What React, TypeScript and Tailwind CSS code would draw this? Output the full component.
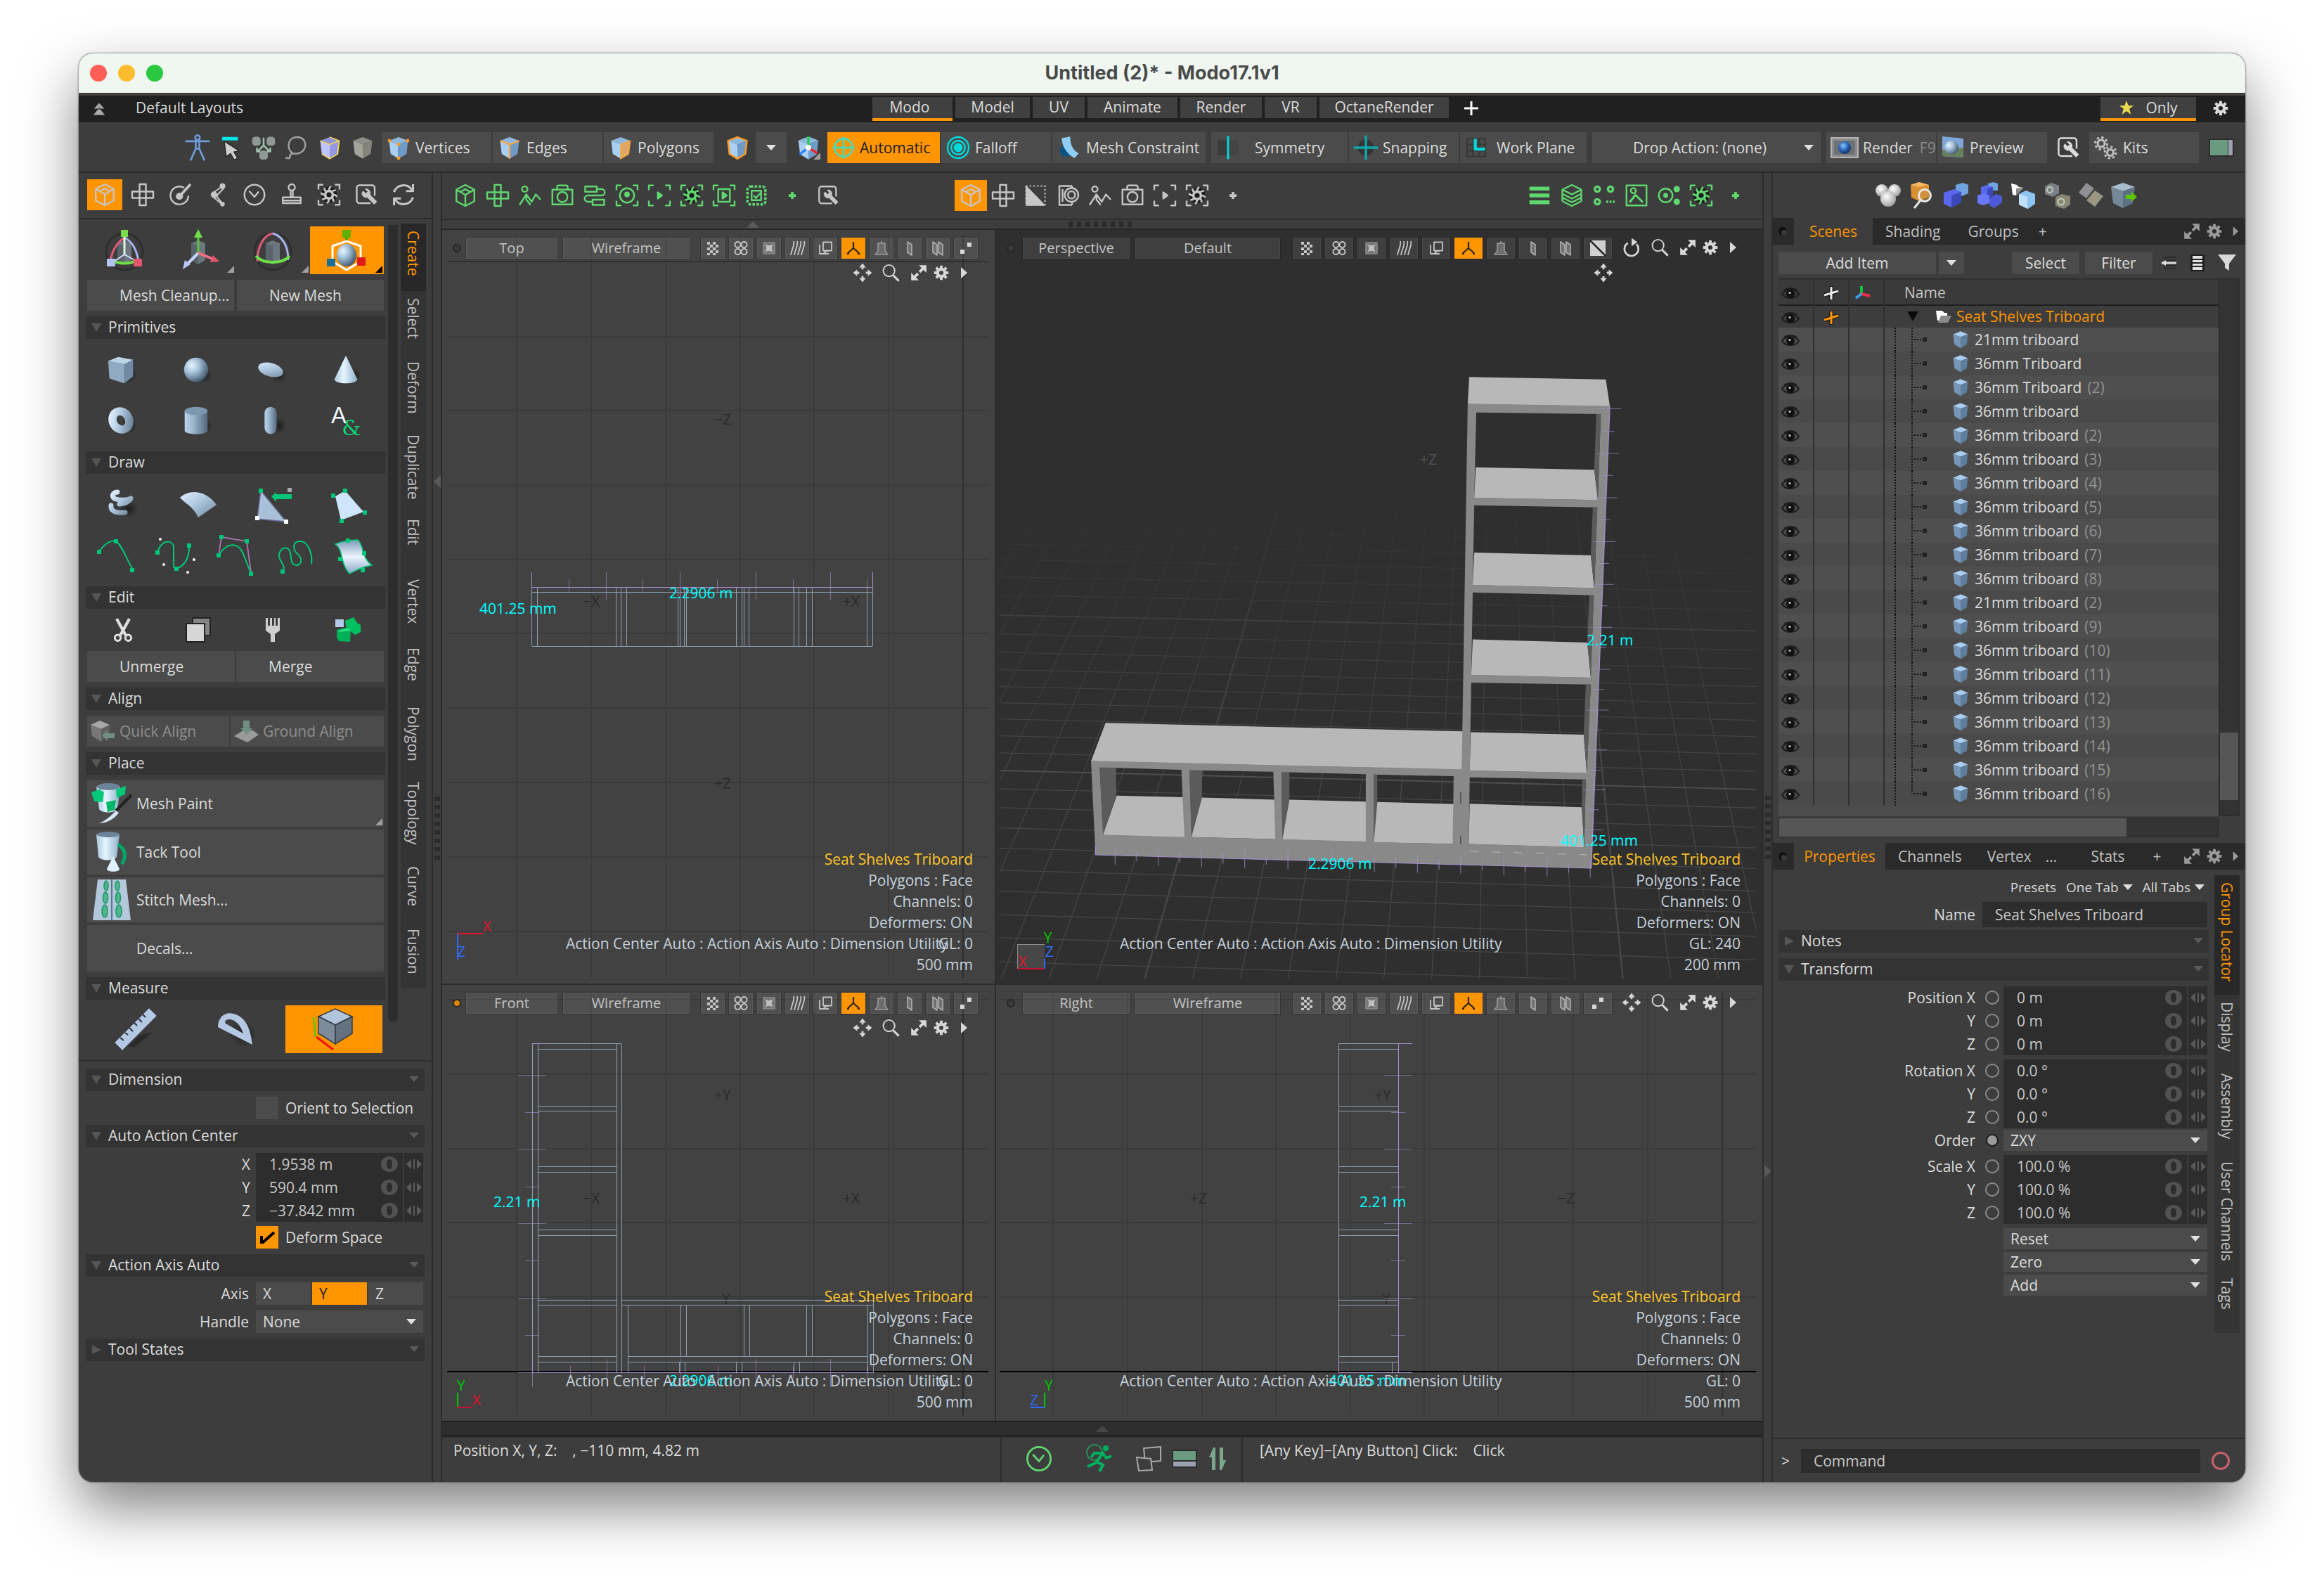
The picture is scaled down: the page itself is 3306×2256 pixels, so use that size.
import React from 'react';

type Kids = { children?: React.ReactNode };

/* ---------- generic drawing helpers ---------- */

function Ico({ size = 36, children, className = '' }: Kids & { size?: number; className?: string }) {
  return (
    <svg width={size} height={size} viewBox="0 0 24 24" fill="none" stroke="currentColor" strokeWidth="1.6" strokeLinejoin="round" className={'shrink-0 ' + className}>
      {children}
    </svg>
  );
}

function Defs() {
  return (
    <svg width="0" height="0" className="absolute">
      <defs>
        <linearGradient id="gh" x1="0" x2="1"><stop offset="0" stopColor="#b9d3ea" /><stop offset=".35" stopColor="#9db8cf" /><stop offset="1" stopColor="#54687b" /></linearGradient>
        <linearGradient id="gd" x1="0" y1="0" x2="1" y2="1"><stop offset="0" stopColor="#e2f0ff" /><stop offset=".5" stopColor="#a9c3da" /><stop offset="1" stopColor="#6d8499" /></linearGradient>
        <linearGradient id="gl" x1="0" x2="1"><stop offset="0" stopColor="#a9c6dd" /><stop offset=".4" stopColor="#e6f6ff" /><stop offset="1" stopColor="#8db0c8" /></linearGradient>
        <linearGradient id="gw" x1="0" y1="0" x2="0" y2="1"><stop offset="0" stopColor="#7f9ab8" /><stop offset=".5" stopColor="#eaf4ff" /><stop offset="1" stopColor="#8aa6c6" /></linearGradient>
        <radialGradient id="gs" cx=".32" cy=".32" r=".75"><stop offset="0" stopColor="#e8f5ff" /><stop offset=".45" stopColor="#9dbbd4" /><stop offset="1" stopColor="#3f5366" /></radialGradient>
        <radialGradient id="gb" cx=".4" cy=".35" r=".7"><stop offset="0" stopColor="#8fc7ff" /><stop offset=".5" stopColor="#2a67b8" /><stop offset="1" stopColor="#0d2c5c" /></radialGradient>
        <radialGradient id="gwh" cx=".4" cy=".35" r=".7"><stop offset="0" stopColor="#ffffff" /><stop offset="1" stopColor="#9a9a9a" /></radialGradient>
        <radialGradient id="shadow"><stop offset="0" stopColor="#000" stopOpacity=".5" /><stop offset="1" stopColor="#000" stopOpacity="0" /></radialGradient>
      </defs>
    </svg>
  );
}

/* Solid cube in three shades */
function Cube({ size = 36, top = '#8fb8de', left = '#a9d0f2', right = '#6f9cc6', edge = '' }: { size?: number; top?: string; left?: string; right?: string; edge?: string }) {
  return (
    <svg width={size} height={size} viewBox="0 0 24 24" className="shrink-0">
      <path d="M12 2 21 5.500 12 9 3 5.500z" fill={top} />
      <path d="M3 5.500 12 9V22.500L4.500 18z" fill={left} />
      <path d="M21 5.500 12 9V22.500L19.500 18z" fill={right} />
      {edge === 'vert' && <g fill="#ff9a1f"><path d="M12 9v13.500" stroke="#5f88b0" /><circle cx="3.400" cy="5.500" r="1.600" /><circle cx="20.600" cy="5.500" r="1.600" /><circle cx="12" cy="9" r="1.600" /><circle cx="12" cy="22" r="1.600" /></g>}
      {edge === 'edge' && <path d="M3 5.500 12 9 21 5.500M12 9V22.500" fill="none" stroke="#ffa63a" strokeWidth="1.6" />}
      {edge === 'poly' && <path d="M21 5.500 12 9V22.500L19.500 18z" fill="#e0a868" stroke="#ffa63a" />}
      {edge === 'all' && <path d="M12 2 21 5.500 19.500 18 12 22.500 4.500 18 3 5.500z" fill="none" stroke="#ff9a1f" strokeWidth="1.6" />}
      {edge === 'gold' && <path d="M12 2 21 5.500 19.500 18 12 22.500 4.500 18M3 5.500 12 9 21 5.500" fill="none" stroke="#f5d15a" strokeWidth="1.2" />}
      {edge === 'axis' && <g fill="none" strokeWidth="2"><path d="M12 12V2" stroke="#1fd14a" /><path d="M12 12 4 18" stroke="#2f7bff" /><path d="M12 12 20 17" stroke="#f02020" /><circle cx="12" cy="12" r="1.500" fill="#fff" stroke="#fff" /></g>}
    </svg>
  );
}

function Down({ className = 'text-[#e0e0e0]' }: { className?: string }) {
  return <svg width="14" height="8" viewBox="0 0 14 8" className={'shrink-0 ' + className}><path d="M0 0h14L7 8z" fill="currentColor" /></svg>;
}

function Corner({ className = 'text-[#a0a0a0]' }: { className?: string }) {
  return <svg width="10" height="10" viewBox="0 0 10 10" className={'absolute right-0.5 bottom-0.5 ' + className}><path d="M10 0v10H0z" fill="currentColor" /></svg>;
}

/* ---------- line icon shapes ---------- */

const gearPath = 'M12 5.500V2.500M12 21.500v-3M5.500 12h-3M21.500 12h-3M7.400 7.400 5.300 5.300M18.700 18.700l-2.100-2.100M16.600 7.400l2.100-2.100M5.300 18.700l2.100-2.100';
const brackets = 'M2 7V2.500h4.500M17.500 2.500H22V7M22 17v4.500h-4.500M6.500 21.500H2V17';

const shape = {
  cube: <path d="M12 2 20.500 6.500v11L12 22l-8.500-4.500v-11zM3.500 6.500 12 11.500l8.500-5M12 11.500V22M7 8.800 12 6l5 2.800" />,
  net: <path d="M9 2h6v20H9zM2 9h20v6H2zM9 9v6M15 9v6" />,
  paint: <g><path d="M16 5.500A8.500 8.500 0 1 0 20 13" /><circle cx="11.500" cy="13.500" r="2.600" fill="currentColor" /><path d="M13 12 22 2" strokeWidth="2.400" /></g>,
  bone: <g strokeWidth="1.400"><circle cx="17" cy="3.800" r="2" fill="currentColor" /><circle cx="9" cy="12" r="2.400" fill="currentColor" /><circle cx="17" cy="21" r="1.400" fill="currentColor" /><path d="M15.500 5 7.500 10.500M18 6l-7 7.500M8 14l8.500 7M11 13l6 7.500" /></g>,
  clock: <g><circle cx="12" cy="12" r="9.500" /><path d="M7 8.500 12 14l4-5" /></g>,
  stamp: <g><circle cx="12" cy="5" r="3" /><path d="M11 8v6M13 8v6M3.500 14.500h17V20h-17zM3.500 17.500h17" /></g>,
  gearBox: <g><path d={brackets} /><circle cx="12" cy="12" r="7.500" fill="#1c1c1c" stroke="none" /><circle cx="12" cy="12" r="3.600" strokeWidth="2.400" /><path d="M12 8c0-2 .5-3 2-4M12 16c0 2-.500 3-2 4M8 12c-2 0-3-.500-3.500-2M16 12c2 0 3 .500 3.500 2M9 9c-1-1-1.500-2-1-3.500M15 15c1 1 1.500 2 1 3.500M15 9c1-1 2-1.500 3.500-1M9 15c-1 1-2 1.500-3.500 1" strokeWidth="1.800" /></g>,
  wrenchBox: <g><path d="M16 20H5.500A2.500 2.500 0 0 1 3 17.500v-12A2.500 2.500 0 0 1 5.500 3h12A2.500 2.500 0 0 1 20 5.500V13" /><path d="M9 8.500l2.500 2.500 2-2-2.500-2.500a4 4 0 0 1 4.500 5.500L22 18.500 19.500 21 13 14.500A4 4 0 0 1 8 10z" fill="currentColor" strokeWidth=".6" /></g>,
  refresh: <path d="M3 9.500A9.500 9.500 0 0 1 20 7.500M21 2v6.500h-6.500M21 14.500A9.500 9.500 0 0 1 4 16.500M3 22v-6.500h6.500" strokeWidth="2" />,
  person: <g><circle cx="7" cy="6" r="2.600" /><path d="M2 21 8.500 11l5 7 4-7 4.500 5M8.500 11v5l4 5" /></g>,
  camera: <g><path d="M2.500 6.500h19v14h-19zM7 6.500V4a1.500 1.500 0 0 1 1.500-1.500h7A1.500 1.500 0 0 1 17 4v2.500" /><circle cx="12" cy="13.500" r="4.800" /></g>,
  snake: <path d="M3 3.500h11v5H3zM14 6h4.500a3 3 0 0 1 0 6h-13a3 3 0 0 0 0 6H10M10 16h11v5H10z" />,
  target: <g><path d={brackets} /><circle cx="12" cy="12" r="6.800" /><circle cx="12" cy="11" r="1.800" fill="currentColor" /></g>,
  playB: <g><path d={brackets} /><path d="M10.500 9v6l4-3z" fill="currentColor" /></g>,
  playBox: <g><path d={brackets} /><path d="M6.500 6h11v12h-11z" /><path d="M10.500 9v6l4-3z" fill="currentColor" /></g>,
  chip: <g><rect x="3.500" y="3.500" width="17" height="17" rx="3" strokeDasharray="2.400 1.400" strokeWidth="2.400" /><path d="M7.500 7.500h9v9h-9zM9.500 12l2 2.500 4.500-5" /></g>,
  plus: <path d="M12 8v8M8 12h8" strokeWidth="3" />,
  flip: <g><path d="M3 3h18v18H3z" strokeDasharray="1.500 2" strokeWidth="1.400" /><path d="M3.500 4 20 21H3.500z" fill="currentColor" /></g>,
  lens: <g><path d="M16 3H4v18h12M16 18.500V21M16 3v2M7 6v12" /><circle cx="15.500" cy="11.500" r="6.500" fill="#3d3d3d" /><circle cx="15.500" cy="11.500" r="3.400" /></g>,
  list: <path d="M2.500 5.500h19M2.500 12h19M2.500 18.500h19" strokeWidth="3.600" />,
  layers: <path d="M12 2 21 6.500 12 11 3 6.500zM3 10.500 12 15l9-4.500M3 14 12 18.500l9-4.500M3 17.500 12 22l9-4.500M3 6.500v11M21 6.500v11" />,
  nodes: <g strokeWidth="2.200"><circle cx="5.500" cy="6" r="2.400" /><circle cx="18" cy="6" r="2.400" /><circle cx="5.500" cy="18" r="2.400" /><path d="M14 18h8" strokeDasharray="1.800 1.400" /></g>,
  portrait: <g><path d="M2.500 2.500h19v19h-19z" /><circle cx="9" cy="7.500" r="2.400" /><path d="M5.500 18.500 11 11.500l7 7" strokeWidth="2" /></g>,
  orbit: <g><circle cx="9" cy="12" r="6.500" /><circle cx="9" cy="12" r="1.500" fill="currentColor" /><circle cx="19.500" cy="6" r="2.200" fill="currentColor" /><circle cx="19.500" cy="18" r="2.200" fill="currentColor" /></g>,
  gear: <g><circle cx="12" cy="12" r="4.800" strokeWidth="4" /><path d={gearPath} strokeWidth="3.600" /></g>,
  search: <g><circle cx="10" cy="9.500" r="7" /><path d="m15 15 7 7" strokeWidth="2.600" /></g>,
  move: <g><path d="M12 8V4M12 16v4M8 12H4M16 12h4" strokeWidth="2.400" /><path d="m12 .500 4 5H8zM12 23.500l4-5H8zM.500 12l5-4v8zM23.500 12l-5-4v8z" fill="currentColor" stroke="none" /></g>,
  expand: <g><path d="M12 2h10v10zM2 12v10h10z" fill="currentColor" stroke="none" /><path d="m19 5-6 6M11 13l-6 6" strokeWidth="3.400" /></g>,
  play: <path d="M8 4 17 12l-9 8z" fill="currentColor" stroke="none" />,
  rotate: <g><path d="M7.500 6.500A8.500 8.500 0 1 0 18 8" strokeWidth="2.200" /><path d="M12 .500v10l7-5z" fill="currentColor" stroke="none" /></g>,
};
type ShapeName = keyof typeof shape;

/* ---------- small building blocks ---------- */

function IconBtn({ name, label, className = 'w-[46px] h-11', size = 36 }: { name: ShapeName; label: string; className?: string; size?: number }) {
  return (
    <button aria-label={label} className={'flex items-center justify-center shrink-0 ' + className}>
      <Ico size={size}>{shape[name]}</Ico>
    </button>
  );
}

function Section({ title, open = true, menu = false }: { title: string; open?: boolean; menu?: boolean }) {
  return (
    <button className="flex h-8 w-full shrink-0 items-center bg-[#333] px-2 pb-0.5 text-left">
      <svg width="14" height="14" viewBox="0 0 14 14" className="mr-2.5"><path d={open ? 'M0 2h14L7 14z' : 'M1 1v13L14 8z'} fill="#565656" /></svg>
      <span className="flex-1">{title}</span>
      {menu && <Down className="text-[#5a5a5a]" />}
    </button>
  );
}

function NumField({ label, value }: { label: string; value: string }) {
  return (
    <div className="flex h-8 bg-[#2d2d2d]">
      <input aria-label={label} defaultValue={value} className="min-w-0 flex-1 bg-transparent pl-[19px] text-[#c8c8c8] outline-none" />
      <button aria-label={'Reset ' + label} className="flex w-[38px] shrink-0 items-center justify-center">
        <svg width="24" height="24" viewBox="0 0 24 24"><path fillRule="evenodd" d="M12 1c7 0 12 5 12 11s-5 11-12 11S0 18 0 12 5 1 12 1zm0 4c-2.500 0-4 3-4 7s1.500 7 4 7 4-3 4-7-1.500-7-4-7z" fill="#525252" /></svg>
      </button>
      <button aria-label={'Drag ' + label} className="flex w-[29px] shrink-0 items-center justify-center border-l-2 border-[#3d3d3d]">
        <svg width="22" height="14" viewBox="0 0 22 14" fill="#5a5a5a" className="shrink-0"><path d="M7 0v14L0 7zM10 0h2v14h-2zM15 0v14l7-7z" /></svg>
      </button>
    </div>
  );
}

function Drop({ label, options, className = '' }: { label: string; options: string[]; className?: string }) {
  return (
    <div className={'relative flex ' + className}>
      <select aria-label={label} className="h-full w-full appearance-none bg-[#4b4b4b] pl-[10px] leading-none outline-none">
        {options.map((o) => <option key={o}>{o}</option>)}
      </select>
      <span className="pointer-events-none absolute inset-y-0 right-2.5 flex items-center"><Down /></span>
    </div>
  );
}

function Grip({ vertical = false }: { vertical?: boolean }) {
  return (
    <div className={vertical ? 'flex flex-col gap-1.5' : 'flex gap-1.5'}>
      {[0, 1, 2, 3, 4, 5, 6, 7].map((i) => <span key={i} className={vertical ? 'h-1.5 w-2 bg-[#2a2a2a]' : 'h-2 w-1.5 bg-[#2a2a2a]'} />)}
    </div>
  );
}

/* ---------- header bars ---------- */

function TitleBar() {
  return (
    <div className="relative flex h-14 shrink-0 items-center bg-[#f0f7f1] px-4">
      <div className="flex gap-4">
        <button aria-label="Close" className="size-6 rounded-full bg-[#ff5f57]" />
        <button aria-label="Minimise" className="size-6 rounded-full bg-[#febc2e]" />
        <button aria-label="Zoom" className="size-6 rounded-full bg-[#28c840]" />
      </div>
      <h1 className="absolute inset-x-0 text-center font-['Inter',sans-serif] text-[27px] leading-14 font-bold text-[#484b49]">Untitled (2)* - Modo17.1v1</h1>
    </div>
  );
}

const layouts: [string, string][] = [
  ['Modo', 'w-[114px]'], ['Model', 'w-[106px]'], ['UV', 'w-[74px]'], ['Animate', 'w-32'], ['Render', 'w-[116px]'], ['VR', 'w-[74px]'], ['OctaneRender', 'w-[184px]'],
];

function MenuBar() {
  return (
    <nav className="grid h-[46px] shrink-0 grid-cols-[1fr_auto_1fr] border-y-4 border-[#404040] bg-[#202020]">
      <div className="flex items-center gap-[43px] pb-1 pl-5">
        <svg width="18" height="18" viewBox="0 0 18 18" fill="#a8a8a8" className="mt-1"><path d="M9 0l8 9H1zM9 7l9 11H0z" stroke="#202020" strokeWidth=".8" /></svg>
        <button>Default Layouts</button>
      </div>
      <div className="flex gap-1 pt-0.5 pl-14">
        {layouts.map(([t, w]) => (
          <button key={t} className={w + ' h-[34px] pb-0.5 bg-[#404040] leading-none border-b-4 ' + (t === 'Modo' ? 'pr-2 border-[#ff9500]' : 'border-[#202020]')}>{t}</button>
        ))}
        <button aria-label="Add layout" className="flex w-14 items-center justify-center pb-1">
          <svg width="20" height="20" viewBox="0 0 20 20"><path d="M10 0v20M0 10h20" stroke="#fff" strokeWidth="3" /></svg>
        </button>
      </div>
      <div className="flex justify-end pt-0.5">
        <button className="flex h-[34px] w-[136px] items-center justify-center gap-4 border-b-4 border-[#ff9500] bg-[#404040]">
          <svg width="22" height="22" viewBox="0 0 24 24"><path d="M12 1l3 8h8l-6.500 5L19 23l-7-5.500L5 23l2.500-9L1 9h8z" fill="#e6dc4e" /></svg>
          Only
        </button>
        <button aria-label="Settings" className="flex w-[70px] items-center justify-center pb-1"><Ico size={26}>{shape.gear}</Ico></button>
      </div>
    </nav>
  );
}

function TBtn({ icon, children, className = '' }: Kids & { icon?: React.ReactNode; className?: string }) {
  return <button className={'flex h-11 shrink-0 items-center gap-1.5 pl-1.5 whitespace-nowrap ' + className}>{icon}{children}</button>;
}

const cyan = '#00d8dc';

function Toolbar() {
  const slot = 'flex w-[47px] shrink-0 items-center justify-center';
  return (
    <div className="flex h-[68px] shrink-0 items-center border-b-2 border-[#2c2c2c] pr-4 pb-0.5 pl-[145px]">
      <button aria-label="Rig" className={slot}><Ico size={40} className="text-[#6f9bd8]"><circle cx="12" cy="3.500" r="2" /><path d="M1.500 6.500h21M10.500 6v7L6 23M13.500 6v7L18 23M10.500 13h3" /></Ico></button>
      <button aria-label="Select" className={slot}><Ico size={36} className="text-[#d0d0d0]"><path d="M4 3.500h15" stroke="#00e5e5" strokeWidth="3.200" /><path d="M6 6l14 9-5 1 3.500 6-3 1.500-3.500-6-4 3z" fill="currentColor" stroke="#222" strokeWidth=".8" /></Ico></button>
      <button aria-label="Symmetry set" className={slot}><Ico size={38} className="text-[#8f9a96]"><rect x="2.500" y="3" width="6" height="6.500" rx="2" fill="currentColor" /><rect x="15.500" y="3" width="6" height="6.500" rx="2" fill="currentColor" /><rect x="9" y="15.500" width="6" height="6.500" rx="2" fill="currentColor" /><path d="M12 3v8M12 10l-5 5M12 10l5 5M6 12v3.500h3M18 12v3.500h-3" stroke="#9fc0ae" /></Ico></button>
      <button aria-label="Lasso" className={slot}><Ico size={38} className="text-[#a0a0a0]"><path d="M9 17.500C2 13 4 2.500 12.500 2.500c9 0 10 12 1.500 14.500-4 1-8-.500-8 2.500s-2 2-4 1.500" /></Ico></button>
      <button aria-label="Items" className={slot}><Cube top="#8d95de" left="#bfc4ff" right="#9299e0" edge="gold" /></button>
      <button aria-label="Material" className={slot}><Cube top="#8d8d89" left="#a5a5a0" right="#85837a" /></button>
      <TBtn className="ml-1 w-[156px] bg-[#4b4b4b]" icon={<Cube edge="vert" />}>Vertices</TBtn>
      <TBtn className="ml-0.5 w-[156px] bg-[#4b4b4b]" icon={<Cube edge="edge" />}>Edges</TBtn>
      <TBtn className="ml-0.5 w-[156px] bg-[#4b4b4b]" icon={<Cube edge="poly" />}>Polygons</TBtn>
      <button aria-label="Selection types" className="ml-4 shrink-0"><Cube edge="all" /></button>
      <button aria-label="More types" className="ml-2 flex h-11 w-11 shrink-0 items-center justify-center bg-[#4b4b4b]"><Down /></button>
      <button aria-label="Action center" className="relative mr-2 ml-3 shrink-0"><Cube edge="axis" size={38} /><Corner /></button>
      <TBtn className="w-[160px] bg-[#ff9500] text-[#1c1c1c]" icon={<Ico size={34} className="text-[#4fd8b4]"><circle cx="12" cy="12" r="9" strokeWidth="2" /><path d="M12 1v22M1 12h22" strokeWidth="2" /></Ico>}>Automatic</TBtn>
      <TBtn className="ml-0.5 w-[156px] bg-[#4b4b4b]" icon={<Ico size={36}><g stroke={cyan}><circle cx="12" cy="12" r="10" /><circle cx="12" cy="12" r="6.500" /><circle cx="12" cy="12" r="3.500" fill={cyan} /></g></Ico>}>Falloff</TBtn>
      <TBtn className="ml-0.5 w-[218px] gap-1 bg-[#4b4b4b]" icon={<Ico size={36}><circle cx="9" cy="15" r="6" fill="#0c5480" stroke="none" /><path d="M5 3l8-1.500c-.500 6 2 13 8 16L17 22C10 18 5 11 5 3z" fill="#8fcdf5" stroke="none" /></Ico>}>Mesh Constraint</TBtn>
      <TBtn className="ml-2 w-[194px] gap-5 bg-[#4b4b4b]" icon={<Ico size={36}><path d="M2 5h9v14H2z" fill="#3a3a3a" stroke="none" /><path d="M12 1v22" stroke={cyan} strokeWidth="2" /><path d="M13 5h9v14h-9z" fill="#444" stroke="none" /></Ico>}>Symmetry</TBtn>
      <TBtn className="ml-0.5 w-[156px] gap-1 bg-[#4b4b4b]" icon={<Ico size={36}><circle cx="12" cy="12" r="7.500" fill="#333" stroke="none" /><path d="M12 .500v23M.500 12h23" stroke="#0ea8ac" strokeWidth="2.200" /></Ico>}>Snapping</TBtn>
      <TBtn className="ml-0.5 w-[180px] gap-3 bg-[#4b4b4b]" icon={<Ico size={34}><path d="M3 3h18v18H3zM3 9h18M3 15h18M9 3v18M15 3v18" stroke="#383838" /><path d="M11 3v10.500h10" stroke={cyan} strokeWidth="3" /></Ico>}>Work Plane</TBtn>
      <div className="relative ml-2 h-11 min-w-60 flex-1">
        <select aria-label="Drop Action" className="size-full appearance-none bg-[#4b4b4b] pl-[58px] outline-none"><option>Drop Action: (none)</option></select>
        <span className="pointer-events-none absolute inset-y-0 right-2.5 flex items-center"><Down /></span>
      </div>
      <TBtn className="ml-2 w-[156px] gap-1 bg-[#4b4b4b] pl-0.5" icon={<svg width="40" height="30" viewBox="0 0 40 30" className="shrink-0"><path d="M1 1h38v28H1z" fill="#8c8c8c" stroke="#b4b4b4" strokeWidth="2" /><path d="M5 5h30v20H5z" fill="#6c7176" /><circle cx="20" cy="15" r="9" fill="url(#gb)" /></svg>}>Render<span className="ml-1 text-[#8a8a8a]">F9</span></TBtn>
      <TBtn className="ml-0.5 w-[156px] gap-2 bg-[#4b4b4b]" icon={<svg width="32" height="34" viewBox="0 0 32 34" className="shrink-0"><path d="M1 1l30 3v27L1 29z" fill="#7fa6d8" /><path d="M1 20l30-3v14L1 29z" fill="#68805c" /><circle cx="14" cy="17" r="10" fill="url(#gs)" /></svg>}>Preview</TBtn>
      <IconBtn name="wrenchBox" label="Render tools" className="w-[60px] h-11" />
      <TBtn className="w-[156px] gap-2 bg-[#4b4b4b]" icon={<svg width="34" height="34" viewBox="0 0 34 34" className="shrink-0" fill="none" stroke="#c4c4c4"><circle cx="11" cy="11" r="5" strokeWidth="3" /><circle cx="11" cy="11" r="8.500" strokeWidth="3" strokeDasharray="3.400 3.270" /><circle cx="24" cy="24" r="4.500" strokeWidth="3" /><circle cx="24" cy="24" r="8" strokeWidth="3" strokeDasharray="3.100 3.180" /></svg>}>Kits</TBtn>
      <button aria-label="Toggle panel" className="ml-3.5 shrink-0"><svg width="36" height="26" viewBox="0 0 36 26"><path d="M0 0h36v26H0z" fill="#2c2c2c" /><path d="M2 2h25v22H2z" fill="#6a9a80" /><path d="M28 2h6v22h-6z" fill="#9aa2b2" /></svg></button>
    </div>
  );
}

/* ---------- left panel ---------- */

const shade = <ellipse cx="18" cy="16" rx="6" ry="6" fill="url(#shadow)" stroke="none" />;

const primitives: Record<string, React.ReactNode> = {
  Cube: <>{shade}<path d="M2.500 5.500 10 2.500 21 4.500 14.500 8z" fill="#bcd4e8" /><path d="M2.500 5.500 14.500 8v14L3.500 18.500z" fill="#8faac2" /><path d="M14.500 8 21 4.500V17l-6.500 5z" fill="#6f8aa2" /></>,
  Sphere: <>{shade}<circle cx="12" cy="12" r="9" fill="url(#gs)" /></>,
  Ellipsoid: <>{shade}<ellipse cx="12" cy="12" rx="9.500" ry="5" transform="rotate(16 12 12)" fill="url(#gd)" /></>,
  Cone: <>{shade}<path d="M12 1.500 20.500 19c0 4-17 4-17 0z" fill="url(#gl)" /></>,
  Torus: <>{shade}<ellipse cx="12" cy="12" rx="6" ry="7" fill="none" stroke="url(#gd)" strokeWidth="6" transform="rotate(-30 12 12)" /></>,
  Cylinder: <>{shade}<path d="M3.500 5v14.500c0 3.500 17 3.500 17 0V5z" fill="url(#gh)" /><ellipse cx="12" cy="5" rx="8.500" ry="3" fill="#7c98b0" /></>,
  Capsule: <>{shade}<rect x="7.500" y="2" width="9" height="20" rx="4.500" fill="url(#gh)" /></>,
  Text: <><text x="1" y="14" fontFamily="Liberation Sans" fontSize="17" fill="#f2f8ff">A</text><text x="9" y="23" fontFamily="DejaVu Serif" fontSize="16" fill="#08d878">&amp;</text></>,
};

const green = '#00c878';
const dot = (x: number, y: number, c = green) => <rect x={x - 3} y={y - 3} width="6" height="6" fill={c} key={x + '-' + y} />;

const drawTools: Record<string, React.ReactNode> = {
  Helix: <g fill="none" stroke="url(#gd)" strokeWidth="7" strokeLinecap="round"><ellipse cx="38" cy="36" rx="14" ry="12" fill="url(#shadow)" stroke="none" /><path d="M22 12c-8 1-9 8-2 10 9 3 20 0 21-1s-4 8-16 8M13 31c-1 8 6 11 20 10" /></g>,
  Fan: <path d="M4 20C16 8 40 8 56 30L30 48C24 34 14 30 4 20z" fill="url(#gd)" />,
  Polygon: <g><path d="M13 10 8 50 49 54z" fill="#a9c1d8" stroke="#6d6d9c" strokeWidth="1.500" /><path d="M28 18l7-6v3h22v7H35v4z" fill={green} /><g>{dot(13, 10)}{dot(8, 49, '#fff')}{dot(49, 54, '#fff')}{dot(54, 9, '#a8a8a8')}</g></g>,
  Patch: <g><path d="M12 18 26 10 52 40 20 52z" fill="#cfe5fb" />{dot(9, 17)}{dot(26, 10)}{dot(54, 41)}{dot(21, 53)}</g>,
};

const curveTools: Record<string, React.ReactNode> = {
  Curve: <g><path d="M6 25C14 12 24 8 30 10c8 4 16 28 24 40" fill="none" stroke={green} strokeWidth="2" />{dot(6, 25)}{dot(30, 10)}{dot(53, 51)}</g>,
  Bezier: <g><path d="M4 26C8 10 22 6 27 16V46c2 6 22 0 22-29" fill="none" stroke={green} strokeWidth="2" />{dot(4, 26)}{dot(31, 49)}{dot(49, 16)}<g fill="#fff"><circle cx="8" cy="7" r="2" /><circle cx="13" cy="43" r="2" /><circle cx="47" cy="54" r="2" /><circle cx="56" cy="36" r="2" /></g></g>,
  'B-spline': <g><path d="M6 30 10 4 46 10 52 54" fill="none" stroke="#a070a8" strokeWidth="2" /><path d="M6 30C18 10 34 12 40 26c5 10 8 22 12 28" fill="none" stroke={green} strokeWidth="2" />{dot(6, 30)}{dot(10, 4)}{dot(46, 10)}{dot(52, 56)}</g>,
  Sketch: <g><path d="M13 52c4-10-8-14-6-24 4-12 14-10 16-2 2 10 0 16 8 18 8 0 10-10 2-16-8-8-6-18 4-18 12 0 18 20 16 32" fill="none" stroke={green} strokeWidth="2" />{dot(12, 53)}</g>,
  Surface: <g><path d="M2 14c10-4 20-6 32-6 10 10 4 24 20 36-12 2-20 6-32 12C8 40 14 22 2 14z" fill="url(#gw)" stroke={green} strokeWidth="1.500" />{dot(20, 9)}{dot(43, 27)}{dot(9, 35)}{dot(41, 51)}</g>,
};

const leftTabs: [string, string][] = [
  ['Create', 'h-24'], ['Select', 'h-[90px]'], ['Deform', 'h-[104px]'], ['Duplicate', 'h-[120px]'], ['Edit', 'h-[86px]'], ['Vertex', 'h-[97px]'], ['Edge', 'h-[84px]'], ['Polygon', 'h-[107px]'], ['Topology', 'h-[120px]'], ['Curve', 'h-[89px]'], ['Fusion', 'h-[95px]'],
];

const rightTabs: [string, string][] = [
  ['Group Locator', 'h-[170px]'], ['Display', 'h-[102px]'], ['Assembly', 'h-[125px]'], ['User Channels', 'h-[166px]'], ['Tags', 'h-[88px]'],
];

function SideTabs({ items }: { items: [string, string][] }) {
  return (
    <div className="flex w-9 shrink-0 flex-col self-start bg-[#343434]">
      {items.map(([t, h], i) => (
        <button key={t} className={h + ' flex w-9 items-center pt-2.5 text-left [writing-mode:vertical-rl] whitespace-nowrap ' + (i === 0 ? 'bg-[#282828] text-[#ff9500]' : 'text-[#c0c0c0]')}>{t}</button>
      ))}
    </div>
  );
}

function Gizmo({ kind }: { kind: 'all' | 'move' | 'ring' | 'scale' }) {
  return (
    <svg width="60" height="60" viewBox="0 0 60 60" fill="none">
      {kind !== 'scale' && <path d="M20 20l10-4 10 4v24l-10 6-10-6z" fill="#6c767e" />}
      {kind !== 'scale' && <path d="M20 20l10 4v26l-10-6z" fill="#59636b" />}
      {kind === 'all' && <g><circle cx="30" cy="32" r="26" stroke="#2e2e2e" strokeWidth="3" /><path d="M30 12C18 20 12 32 10 46" stroke="#e05a78" strokeWidth="3" /><path d="M30 12c12 6 18 20 20 34" stroke="#a8b4f0" strokeWidth="3" /><path d="M12 44c10 6 26 6 36 0" stroke="#6fe04a" strokeWidth="4" /><path d="M30 36V8" stroke="#dff5d8" strokeWidth="3" /><path d="M30 36 12 48M30 36l18 10" stroke="#d8e0ff" strokeWidth="2" /><path d="M25 1h10v10H25z" fill="#76dc4a" /><path d="M5 42h12v11H5z" fill="#b4c4f4" /><path d="M43 42h12v11H43z" fill="#e2566c" /></g>}
      {kind === 'move' && <g><path d="M30 34V8" stroke="#5ac838" strokeWidth="3" /><path d="m30 0 6 12H24z" fill="#6fe04a" /><path d="M30 34 12 52" stroke="#c8d4ff" strokeWidth="4" /><path d="m8 57 3-13 8 6z" fill="#b8c8f8" /><path d="m30 34 20 8" stroke="#f0708a" strokeWidth="4" /><path d="m60 46-13 1 4-10z" fill="#e2566c" /></g>}
      {kind === 'ring' && <g><circle cx="30" cy="32" r="26" stroke="#2e2e2e" strokeWidth="3" /><path d="M8 46C8 24 18 8 30 6" stroke="#e05a78" strokeWidth="3" /><path d="M30 6c14 4 22 18 22 38" stroke="#a8b4f0" strokeWidth="3" /><path d="M6 38c10 12 38 12 48 0" stroke="#6fe04a" strokeWidth="4" /></g>}
      {kind === 'scale' && <g><path d="M30 18V6" stroke="#5a9c00" strokeWidth="4" /><path d="M24 1h12v11H24z" fill="#5fb000" /><path d="M10 24l20-7 20 7v22L30 58 10 46z" stroke="#fff" strokeWidth="3" /><ellipse cx="30" cy="37" rx="14" ry="16" fill="url(#gs)" /><path d="M2 42h12v11H2z" fill="#1a6e96" /><path d="M45 40h12v12H45z" fill="#e01a1a" /></g>}
    </svg>
  );
}

function PlaceRow({ icon, text, className, corner }: { icon?: React.ReactNode; text: string; className: string; corner?: boolean }) {
  return (
    <button className={'relative flex items-center bg-[#4b4b4b] ' + className}>
      <span className="flex w-[70px] justify-center">{icon}</span>{text}{corner && <Corner />}
    </button>
  );
}

function Toolbox() {
  return (
    <div className="flex shrink-0 border-b-2 border-[#2c2c2c] pt-1.5 pb-2.5 pl-2.5">
      <div className="mt-1 flex w-[426px] shrink-0 flex-col gap-2">
        <div className="mx-0.5 grid h-[68px] grid-cols-4">
          {(['all', 'move', 'ring', 'scale'] as const).map((k) => (
            <button key={k} aria-label={k} className={'relative flex items-center justify-center ' + (k === 'scale' ? 'bg-[#ff9500]' : '')}>
              <Gizmo kind={k} />{k !== 'all' && <Corner className={k === 'scale' ? 'text-black' : 'text-[#a0a0a0]'} />}
            </button>
          ))}
        </div>
        <div className="mx-0.5 grid h-11 grid-cols-2 gap-1">
          <button className="bg-[#4b4b4b] pl-[46px] text-left">Mesh Cleanup...</button>
          <button className="bg-[#4b4b4b] pl-[46px] text-left">New Mesh</button>
        </div>
        <Section title="Primitives" />
        <div className="grid h-36 grid-cols-4">
          {Object.entries(primitives).map(([k, v]) => (
            <button key={k} aria-label={k} className="flex items-center justify-center"><svg width="46" height="46" viewBox="0 0 24 24" className="mr-1.5 overflow-visible">{v}</svg></button>
          ))}
        </div>
        <Section title="Draw" />
        <div className="flex h-36 flex-col">
          <div className="grid flex-1 grid-cols-4">
            {Object.entries(drawTools).map(([k, v]) => (
              <button key={k} aria-label={k} className="flex items-center justify-center"><svg width="60" height="60" viewBox="0 0 60 60">{v}</svg></button>
            ))}
          </div>
          <div className="grid flex-1 grid-cols-5">
            {Object.entries(curveTools).map(([k, v]) => (
              <button key={k} aria-label={k} className="flex items-center justify-center"><svg width="60" height="60" viewBox="0 0 60 60" className="overflow-visible">{v}</svg></button>
            ))}
          </div>
        </div>
        <Section title="Edit" />
        <div className="grid h-11 grid-cols-4">
          <button aria-label="Cut" className="flex items-center justify-center"><svg width="36" height="36" viewBox="0 0 24 24" fill="none" stroke="#e0e0e0" strokeWidth="2"><circle cx="7" cy="19.500" r="2.800" /><circle cx="17" cy="19.500" r="2.800" /><path d="M6 1.500 14.500 17M18 1.500 9.500 17" strokeWidth="2.800" /></svg></button>
          <button aria-label="Copy" className="flex items-center justify-center"><svg width="36" height="36" viewBox="0 0 36 36"><path d="M10 1h25v25H10z" fill="#858585" stroke="#222" strokeWidth="2" /><path d="M1 9h26v26H1z" fill="#d6d6d6" stroke="#222" strokeWidth="2" /></svg></button>
          <button aria-label="Paste" className="flex items-center justify-center"><svg width="36" height="36" viewBox="0 0 36 36"><path d="M8 1v18l7 5v11h6V24l7-5V1h-3v11h-3V1h-2v11h-3V1h-3v11h-3V1z" fill="#cfcfcf" /></svg></button>
          <button aria-label="Delete" className="flex items-center justify-center"><svg width="40" height="38" viewBox="0 0 40 38"><path d="M2 4h12v11H2z" fill="#b4c8e8" /><path d="M16 6l12-5 5 8 5 3v10l-8 4-6-5-6-2z" fill="#00c060" /><path d="M4 19l16-4 4 4-1 17-16-1-3-5z" fill="#00b058" /><path d="M5 20l16-4 3 4-14 2z" fill="#22dd80" /></svg></button>
        </div>
        <div className="mx-0.5 grid h-11 grid-cols-2 gap-0.5">
          <button className="bg-[#4b4b4b] pl-[46px] text-left">Unmerge</button>
          <button className="bg-[#4b4b4b] pl-[46px] text-left">Merge</button>
        </div>
        <Section title="Align" />
        <div className="mx-0.5 grid h-11 grid-cols-[202fr_218fr] gap-0.5 text-[#8f8f8f]">
          <button className="flex items-center gap-1.5 bg-[#4b4b4b] pl-1"><svg width="36" height="34" viewBox="0 0 36 34"><path d="M1 8 14 2l14 6-12 6z" fill="#a8a8a8" /><path d="M1 8l15 6v18L3 24z" fill="#777" /><path d="M16 14l12-6v10l-12 14z" fill="#5f5f5f" /><path d="M17 23l8-7v4h10v7H25v4z" fill="#6f8f80" /></svg>Quick Align</button>
          <button className="flex items-center gap-1.5 bg-[#4b4b4b] pl-1"><svg width="36" height="34" viewBox="0 0 36 34"><path d="M1 24 14 16h14l8 6-16 11z" fill="#9a9a9a" /><path d="M14 2h9v11h4l-8 9-9-9h4z" fill="#6f8f80" /></svg>Ground Align</button>
        </div>
        <Section title="Place" />
        <div className="mx-0.5 flex flex-col gap-1">
          <PlaceRow className="h-[66px]" corner text="Mesh Paint" icon={<svg width="60" height="60" viewBox="0 0 60 60"><path d="M8 6l4 32c4 6 22 6 26 0l4-32z" fill="url(#gl)" /><ellipse cx="25" cy="6" rx="16" ry="5" fill="#6c8498" /><path d="M1 14l12-4 6 4-2 14-12-1z" fill={green} /><path d="M36 10l14-5-1 12-12 5z" fill={green} /><path d="M22 28l14-3-2 14-10 3z" fill="#00b868" /><path d="M58 18 36 40" stroke="#222" strokeWidth="4" /><path d="M36 40C28 48 22 54 12 58c10 0 22-6 28-15z" fill="#d4e8f8" /></svg>} />
          <PlaceRow className="h-16" text="Tack Tool" icon={<svg width="60" height="60" viewBox="0 0 60 60"><path d="M8 5l3 32c4 6 22 6 26 0l4-32z" fill="url(#gl)" /><ellipse cx="25" cy="5" rx="16" ry="4" fill="#6c8498" /><path d="M39 19c12 8 11 20 5 28" fill="none" stroke="#00a868" strokeWidth="5" /><path d="M32 36l9 18c0 5-18 5-18 0z" fill="#dff0ff" /></svg>} />
          <PlaceRow className="h-16" text="Stitch Mesh..." icon={<svg width="56" height="60" viewBox="0 0 56 60"><path d="M8 1h40l7 58H1z" fill="#b4c8dc" /><path d="M28 1v58" stroke="#5a7488" strokeWidth="2" /><g fill="#52b48c" stroke="#189868" strokeWidth="1.500"><ellipse cx="20" cy="10" rx="3" ry="7" /><ellipse cx="19" cy="27" rx="3.500" ry="8" /><ellipse cx="18" cy="46" rx="4" ry="9" /><ellipse cx="36" cy="10" rx="3" ry="7" /><ellipse cx="37" cy="27" rx="3.500" ry="8" /><ellipse cx="38" cy="46" rx="4" ry="9" /></g></svg>} />
          <PlaceRow className="h-[66px]" text="Decals..." />
        </div>
        <Section title="Measure" />
        <div className="mr-1 grid h-[68px] grid-cols-[142px_1fr_138px]">
          <button aria-label="Ruler" className="flex items-center justify-center"><svg width="62" height="62" viewBox="0 0 62 62"><path d="M20 56c14-16 22-20 34-20L30 56z" fill="#222" opacity=".7" /><path d="M50 1 61 12 12 61 1 50z" fill="#b4c8e4" stroke="#555a70" /><path d="m9 43 5 4M16 36l4 3M22 29l5 5M29 22l4 4M35 16l5 5M41 10l4 4" stroke="#2c3038" strokeWidth="2" /></svg></button>
          <button aria-label="Protractor" className="flex items-center justify-center"><svg width="54" height="50" viewBox="0 0 54 50"><ellipse cx="38" cy="32" rx="20" ry="18" fill="url(#shadow)" /><path fillRule="evenodd" d="M2 22C2 8 12 0 24 3c16 4 24 18 27 44zm11-5 25 14C34 18 26 11 18 11c-5 0-7 3-5 6z" fill="#b4c8e4" /></svg></button>
          <button aria-label="Dimension" className="flex items-center justify-center bg-[#ff9500]"><svg width="64" height="64" viewBox="0 0 64 64"><path d="M10 14 34 3 58 14 34 26z" fill="#b0c4dc" stroke="#333a48" strokeWidth="1.500" /><path d="M10 14l24 12v27L10 38z" fill="#7c8c9c" stroke="#333a48" strokeWidth="1.500" /><path d="M58 14 34 26v27l24-15z" fill="#64727f" stroke="#333a48" strokeWidth="1.500" /><path d="M3 15l3 28" stroke="#70c000" strokeWidth="3" /><path d="m7 43 24 18" stroke="#f01010" strokeWidth="3" /></svg></button>
        </div>
      </div>
      <div className="mx-1 mt-0.5 mb-11 w-3.5 shrink-0 rounded-b-full bg-[#2d2d2d]" />
      <SideTabs items={leftTabs} />
    </div>
  );
}

function Check({ label, checked }: { label: string; checked?: boolean }) {
  return (
    <label className="ml-[242px] flex items-center gap-2.5">
      <span className="relative flex size-8">
        <input type="checkbox" defaultChecked={checked} className="peer size-8 appearance-none bg-[#4b4b4b] checked:bg-[#ff9500]" />
        <svg viewBox="0 0 32 32" className="pointer-events-none absolute inset-0 hidden peer-checked:block"><path d="M8 14v11M9 24 26 9" stroke="#000" strokeWidth="4" fill="none" /></svg>
      </span>
      {label}
    </label>
  );
}

function ToolProps() {
  return (
    <div className="flex flex-1 flex-col gap-2 px-2.5 pt-2.5">
      <Section title="Dimension" menu />
      <Check label="Orient to Selection" />
      <Section title="Auto Action Center" menu />
      <div className="mr-0.5 -mb-0.5 grid grid-cols-[1fr_238px] gap-x-2">
        <div className="flex flex-col gap-px text-right leading-8"><span>X</span><span>Y</span><span>Z</span></div>
        <div className="flex flex-col gap-px bg-[#2d2d2d]">
          <NumField label="Center X" value="1.9538 m" /><NumField label="Center Y" value="590.4 mm" /><NumField label="Center Z" value="−37.842 mm" />
        </div>
      </div>
      <Check label="Deform Space" checked />
      <Section title="Action Axis Auto" menu />
      <div className="mr-0.5 grid h-8 grid-cols-[1fr_238px] items-center gap-x-2">
        <span className="pr-0.5 text-right">Axis</span>
        <div className="grid h-8 grid-cols-3 gap-0.5">
          {['X', 'Y', 'Z'].map((a) => <button key={a} className={'pl-2.5 text-left ' + (a === 'Y' ? 'bg-[#ff9500] text-[#222]' : 'bg-[#4b4b4b]')}>{a}</button>)}
        </div>
      </div>
      <div className="mr-0.5 grid h-8 grid-cols-[1fr_238px] items-center gap-x-2">
        <span className="pr-0.5 text-right">Handle</span>
        <Drop label="Handle" options={['None']} className="h-8" />
      </div>
      <Section title="Tool States" open={false} menu />
    </div>
  );
}

function LeftPanel() {
  const icons: [ShapeName, string][] = [['cube', 'Model'], ['net', 'UV map'], ['paint', 'Paint'], ['bone', 'Rig'], ['clock', 'Time'], ['stamp', 'Stamp'], ['gearBox', 'Settings'], ['wrenchBox', 'Tools'], ['refresh', 'Refresh']];
  return (
    <aside className="flex w-[504px] shrink-0 flex-col border-r-2 border-[#2c2c2c]">
      <div className="grid h-[66px] shrink-0 grid-cols-9 items-center border-b-2 border-[#2c2c2c] pr-3.5 pb-0.5 pl-3 text-[#c6c6c6]">
        {icons.map(([n, l], i) => <IconBtn key={n} name={n} label={l} className={'h-11 ' + (i === 0 ? 'w-[50px] bg-[#ff9500]' : '')} />)}
      </div>
      <Toolbox />
      <ToolProps />
    </aside>
  );
}

/* ---------- viewports ---------- */

const viewIcons: React.ReactNode[] = [
  <path d="M4 3h4v4H4zM12 3h4v4h-4zM8 7h4v4H8zM16 7h4v4h-4zM4 11h4v4H4zM12 11h4v4h-4zM8 15h4v4H8zM16 15h4v4h-4zM4 19h4v3H4zM12 19h4v3h-4z" fill="currentColor" stroke="none" />,
  <g strokeWidth="2"><circle cx="7.500" cy="7" r="4" /><circle cx="16.500" cy="7" r="4" /><circle cx="7.500" cy="17" r="4" /><circle cx="16.500" cy="17" r="4" /></g>,
  <g stroke="#8a8a8a"><path d="M4 4h16v16H4z" fill="#747474" /><path d="M6 6c5 3 7 3 12 0-3 5-3 7 0 12-5-3-7-3-12 0 3-5 3-7 0-12z" fill="#c0c0c0" stroke="none" /></g>,
  <path d="M7 2c2 6-3 12-4 20M12 2c2 6-3 12-4 20M17 2c2 6-3 12-4 20M22 2c2 6-3 12-4 20" strokeWidth="1.800" />,
  <path d="M9 3.500h12v12H9zM4 7v13h13M9 20l4-3M11 17v-1h6" strokeWidth="1.800" />,
  <path d="M12 3v9L4 19M12 12l8 7M3 20h3M18 20h3" stroke="#2a2418" strokeWidth="2.200" />,
  <g stroke="#999"><path d="M7 5h10v11l4 5H3l4-5z" fill="#6c6c6c" /><path d="M12 2v4" /></g>,
  <path d="M9 3l6 4v15l-6-4z" stroke="#b0b0b0" fill="#707070" />,
  <path d="M5 3l6 4v15l-6-4zM13 3l6 4v15l-6-4z" stroke="#b0b0b0" fill="#707070" />,
  <g stroke="none" fill="#d8d8d8"><path d="M14 4h6v6h-6zM4 14h6v6H4z" /></g>,
];

type ViewProps = { name: string; mode: string; wide?: boolean; navRow?: boolean; persp?: boolean; active?: boolean; info: [string, string]; bg: string; viewBox: string; children: React.ReactNode };

function Viewport({ name, mode, wide, navRow, persp, active, info, bg, viewBox, children }: ViewProps) {
  const base = 'flex h-[30px] items-center justify-center border border-[#ffffff10] shadow-[0_0_0_1px_#00000030] ';
  const box = base + 'bg-[#ffffff14]';
  const nav = (
    <div className="flex text-[#d8d8d8]">
      <button aria-label={persp ? 'Rotate' : 'Pan'} className="mr-2 flex size-8 items-center justify-center"><Ico size={28}>{shape[persp ? 'rotate' : 'move']}</Ico></button>
      <button aria-label="Zoom view" className="mr-2 flex size-8 items-center justify-center"><Ico size={28}>{shape.search}</Ico></button>
      <button aria-label="Maximise" className="flex size-8 items-center justify-center"><Ico size={26}>{shape.expand}</Ico></button>
      <button aria-label="Options" className="flex size-8 items-center justify-center"><Ico size={26}>{shape.gear}</Ico></button>
      <button aria-label="More" className="flex size-8 items-center justify-center"><Ico size={24}>{shape.play}</Ico></button>
    </div>
  );
  return (
    <section aria-label={name} className={'relative flex min-w-0 flex-col overflow-hidden ' + bg}>
      <svg viewBox={viewBox} preserveAspectRatio="xMidYMid slice" className="absolute inset-0 size-full" shapeRendering="crispEdges">{children}</svg>
      <div className="relative flex h-[41px] shrink-0 items-end pl-3.5 text-[20px] text-[#c4c4c4]">
        <svg width="14" height="14" viewBox="0 0 14 14" className="mb-2 shrink-0"><circle cx="7" cy="7" r="5" fill={active ? '#e08800' : '#3a3a3a'} stroke="#262626" strokeWidth="2" /></svg>
        <button className={box + (wide ? ' ml-2.5 w-[152px]' : ' ml-1.5 w-[130px]')}>{name}</button>
        <button className={box + (wide ? ' ml-2 w-[206px]' : ' ml-2 w-[180px]')}>{mode}</button>
        <div className={'flex gap-1.5 ' + (wide ? 'ml-[18px]' : 'ml-4')}>
          {viewIcons.map((v, i) => (
            <button key={i} aria-label={'View option ' + (i + 1)} className={(i === 5 ? base + 'bg-[#ff9500]' : box) + (wide ? ' w-10' : ' w-[34px]')}>
              <Ico size={24}>{persp && i === 9 ? <><path d="M1 1h22v22H1z" fill="#d0d0d0" stroke="none" /><path d="m1 1 22 22" stroke="#2a2a2a" strokeWidth="2.500" /></> : v}</Ico>
            </button>
          ))}
        </div>
        {navRow && <div className="ml-3">{nav}</div>}
      </div>
      {!navRow && <div className="relative flex justify-end pt-1 pr-7">{nav}</div>}
      {persp && <div className="relative flex justify-end pt-1.5 pr-[212px] text-[#d8d8d8]"><Ico size={28}>{shape.move}</Ico></div>}
      <div className="flex-1" />
      <div className="relative grid pb-3 leading-[30px] text-[#c6d2de]">
        <p className="col-start-1 row-start-1 self-end pb-[30px] pl-[176px] whitespace-nowrap">Action Center Auto : Action Axis Auto : Dimension Utility</p>
        <div className="col-start-1 row-start-1 pr-[31px] text-right">
          <p className="text-[#ffc626]">Seat Shelves Triboard</p>
          <p>Polygons : Face</p>
          <p>Channels: 0</p>
          <p>Deformers: ON</p>
          <p>{info[0]}</p>
          <p>{info[1]}</p>
        </div>
      </div>
    </section>
  );
}

const wire = '#8c9fb2';
const violet = '#a98fd0';
const Lines = ({ d, c = wire, w = 1, o = 1 }: { d: string; c?: string; w?: number; o?: number }) => <path d={d} stroke={c} strokeWidth={w} opacity={o} fill="none" />;
const vs = (xs: number[], a: number, b: number) => xs.map((x) => `M${x} ${a}V${b}`).join('');
const hs = (ys: number[], a: number, b: number) => ys.map((y) => `M${a} ${y}H${b}`).join('');
const Dim = ({ x, y, children, c = '#00ffff' }: { x: number; y: number; children: React.ReactNode; c?: string }) => <text x={x} y={y} fill={c} fontSize="21" textRendering="geometricPrecision">{children}</text>;
const faint = '#2a2a2a';

function TopScene() {
  return (
    <>
      <Lines d={vs([735, 841, 947, 1053, 1158, 1264], 334, 1391) + hs([479, 584, 690, 796, 901, 1007, 1113, 1219, 1325], 636, 1406)} c="#3a3a3a" w={2} />
      <Lines d={vs([1370], 334, 1391) + hs([372], 636, 1406)} c="#303030" w={2} />
      <Dim x={829} y={863} c={faint}>−X</Dim><Dim x={1199} y={863} c={faint}>+X</Dim><Dim x={1016} y={604} c={faint}>−Z</Dim><Dim x={1016} y={1122} c={faint}>+Z</Dim>
      <Lines d={vs([765, 877, 884, 892, 965, 968, 974, 977, 1047, 1055, 1058, 1065, 1129, 1136, 1147, 1155, 1233, 1241, 757], 835, 919) + hs([842], 757, 1241) + hs([919], 757, 1241)} />
      <Lines d={hs([835], 757, 1242) + vs([757, 1241], 814, 835)} c={violet} />
      <Lines d={vs([863, 968, 1075, 1181], 814, 853) + vs([810, 915, 1021, 1128, 1233], 824, 843)} c={violet} o={0.6} />
      <Dim x={682} y={873}>401.25 mm</Dim><Dim x={952} y={851}>2.2906 m</Dim>
      <path d="M650 1328H687" stroke="#e8102c" strokeWidth="2" /><path d="M651 1328V1365" stroke="#2f6bff" strokeWidth="2" />
      <Dim x={687} y={1325} c="#e8102c">X</Dim><Dim x={650} y={1361} c="#2f6bff">Z</Dim>
    </>
  );
}

const shelfYs = [1485, 1493, 1574, 1581, 1660, 1668, 1750, 1758, 1850, 1857, 1930, 1938];

function FrontScene() {
  return (
    <>
      <Lines d={vs([735, 841, 947, 1053, 1158, 1264], 1410, 2013) + hs([1422, 1528, 1634, 1739, 1845], 636, 1406)} c="#3a3a3a" w={2} />
      <Lines d={vs([1370], 1410, 2013)} c="#2c2c2c" w={2} />
      <path d="M636 1951H1406" stroke="#000" strokeWidth="2" />
      <Dim x={829} y={1712} c={faint}>−X</Dim><Dim x={1199} y={1712} c={faint}>+X</Dim><Dim x={1016} y={1565} c={faint}>+Y</Dim><Dim x={1027} y={1855} c={faint}>Y</Dim>
      <Lines d={hs(shelfYs, 765, 877) + vs([757, 765, 877, 884], 1485, 1953) + hs([1485], 757, 884)} />
      <Lines d={hs([1850, 1857], 884, 1242) + hs([1930, 1938], 893, 1234) + vs([893, 968, 976, 1058, 1066, 1147, 1155], 1857, 1930) + vs([893, 1234], 1857, 1953) + vs([1242], 1850, 1953) + vs([966, 974, 1047, 1055, 1129, 1137], 1938, 1953)} />
      <Lines d={hs([1953], 757, 1242) + hs([1485], 757, 777)} c={violet} />
      <Lines d={hs([1530, 1635, 1741, 1848, 1953], 737, 777) + hs([1583, 1689, 1794, 1900], 747, 767) + vs([757, 863, 968, 1075, 1181], 1933, 1973) + vs([811, 916, 1021, 1128, 1233], 1943, 1961)} c={violet} o={0.6} />
      <Dim x={702} y={1717}>2.21 m</Dim><Dim x={952} y={1971}>2.2906 m</Dim>
      <path d="M651 1981V2002" stroke="#00d000" strokeWidth="2" /><path d="M650 2002H671" stroke="#c81030" strokeWidth="2" />
      <Dim x={650} y={1978} c="#00c800">Y</Dim><Dim x={672} y={1999} c="#e8102c">X</Dim>
    </>
  );
}

function RightScene() {
  return (
    <>
      <Lines d={vs([1498, 1604, 1710, 1815, 1921, 2026, 2131, 2238, 2344], 1410, 2013) + hs([1422, 1528, 1634, 1739, 1845], 1422, 2498)} c="#3a3a3a" w={2} />
      <Lines d={vs([2450], 1410, 2013)} c="#303030" w={2} />
      <path d="M1422 1951H2498" stroke="#000" strokeWidth="2" />
      <Dim x={1693} y={1712} c={faint}>+Z</Dim><Dim x={2216} y={1712} c={faint}>−Z</Dim><Dim x={1955} y={1565} c={faint}>+Y</Dim><Dim x={1966} y={1855} c={faint}>Y</Dim>
      <Lines d={hs(shelfYs, 1904, 1989) + vs([1904], 1485, 1953) + vs([1980], 1938, 1953)} />
      <Lines d={vs([1989], 1485, 1953) + hs([1953], 1904, 2009) + vs([1904], 1930, 1953) + hs([1485], 1989, 2009)} c={violet} />
      <Lines d={hs([1530, 1635, 1741, 1848], 1969, 2009) + hs([1583, 1689, 1794, 1900], 1979, 1999)} c={violet} o={0.6} />
      <Dim x={1934} y={1717}>2.21 m</Dim><Dim x={1890} y={1971}>401.25 mm</Dim>
      <path d="M1486 1981V2002" stroke="#00d000" strokeWidth="2" /><path d="M1466 2002H1486" stroke="#2f6bff" strokeWidth="2" />
      <Dim x={1486} y={1978} c="#00c800">Y</Dim><Dim x={1465} y={1999} c="#2f6bff">Z</Dim>
    </>
  );
}

const gridRows = [366, 402, 439, 477, 515, 558, 603, 653, 700, 745, 788, 830, 870, 910, 952, 994, 1038, 1083, 1130, 1180, 1230, 1285, 1337, 1395, 1452, 1512];
const gridCols = Array.from({ length: 26 }, (_, i) => i - 12);
const edgeTicks = [142, 198, 253, 307, 362, 417, 471, 525, 577, 630, 683, 734, 787, 837, 888, 938, 987, 1037, 1086, 1135, 1185];
const baseTicks = Array.from({ length: 23 }, (_, i) => 261 + i * 43);

function PerspectiveScene() {
  return (
    <>
      <defs>
        <linearGradient id="fade" gradientUnits="userSpaceOnUse" x1="0" y1="300" x2="0" y2="1100"><stop offset="0" stopColor="#464646" stopOpacity="0" /><stop offset="1" stopColor="#464646" /></linearGradient>
      </defs>
      <g transform="translate(1400 500) scale(.71429 .57398)" shapeRendering="geometricPrecision">
        <svg x="31" y="-200" width="1506" height="1754" viewBox="31 -200 1506 1754">
          <g fill="none">
            {gridCols.map((k) => {
              const xb = 320 + 95.2 * k;
              const f = 1243 / 3094;
              const bright = k === 0 || k === 10;
              return <path key={k} d={`M${xb + (1024 - xb) * f} 310L${xb} 1553`} stroke="url(#fade)" strokeWidth={bright ? 3.4 : 1.7} />;
            })}
            {gridRows.map((y) => {
              const bright = y === 653 || y === 1038;
              const o = Math.min(1, Math.max(0.08, (y - 310) / 700));
              return <path key={y} d={`M31 ${y}L1537 ${y + 26 + y * 0.02}`} stroke={bright ? '#4e4e4e' : '#464646'} strokeWidth={bright ? 3.4 : 2.2} opacity={o} />;
            })}
          </g>
        </svg>
        <g fill="#5b5b5b">
          <path d="M230 1028 263 1032V1100L237 1200zM409 1036 434 1037V1105L413 1204zM592 1041 608 1043V1110L594 1210zM776 1048 783 1048V1116L776 1217z" />
        </g>
        <g fill="#b8b8b8">
          <path d="M966 63 1238 69 1246 136 963 130z" />
          <path d="M242 920 955 941 952 1036 213 1015zM264 1100 398 1104 400 1204 237 1198zM434 1105 578 1110 581 1208 413 1203zM608 1110 761 1115 761 1215 594 1209zM783 1116 936 1121 934 1220 776 1216z" />
        </g>
        <path fill="#898989" fillRule="evenodd" d="M963 129 1246 135 1209 1280 222 1247 213 1014 951 1035zM980 151 1228 155 1222 368 976 362zM976 381 1221 386 1215 586 973 578zM973 597 1214 604 1208 808 970 801zM970 820 1208 825 1200 1044 967 1038zM967 1055 1198 1060 1195 1228 965 1220zM230 1030 393 1036 399 1203 237 1197zM409 1037 576 1041 580 1208 413 1203zM592 1042 760 1047 760 1214 594 1208zM776 1048 935 1052 933 1220 776 1215z" />
        <path d="M976 362 979 287 1215 293 1222 368zM973 578 976 498 1208 505 1215 586zM970 801 973 713 1201 721 1208 808zM967 1038 969 943 1194 949 1200 1044zM965 1220 967 1120 1190 1129 1195 1228z" fill="#b8b8b8" />
        <path d="M1219 155 1228 155 1222 368 1215 293zM1212 386 1221 386 1215 586 1208 505zM1205 604 1214 604 1208 808 1201 721zM1198 825 1208 825 1200 1044 1194 949zM1191 1060 1198 1060 1195 1228 1190 1129z" fill="#5b5b5b" />
        <path d="M966 1238 1200 1247" stroke="#c0c0c0" strokeWidth="1.5" strokeDasharray="18 26" />
        <path d="M949 1092V1120M949 1200V1220" stroke="#4a4a4a" strokeWidth="2" />
        <g stroke={violet} strokeWidth="1.7" fill="none">
          <path d="M222 1225V1247L1209 1280 1246 135" />
          <g opacity=".65">
            <path d={baseTicks.map((x, i) => { const y = 1247 + (x - 222) * 0.0334; const l = i % 2 ? 13 : 23; return `M${x} ${y - l}V${y + l}`; }).join('')} />
            <path d={edgeTicks.map((y, i) => { const x = 1246 - (y - 135) * 0.0323; const l = i % 2 ? 11 : 22; return `M${x - l} ${y}H${x + l}`; }).join('')} />
          </g>
        </g>
      </g>
      <Dim x={2020} y={661} c="#505050">+Z</Dim>
      <Dim x={2257} y={918}>2.21 m</Dim><Dim x={1861} y={1236}>2.2906 m</Dim><Dim x={2220} y={1203}>401.25 mm</Dim>
      <path d="M1448 1343H1486V1378H1448z" fill="#474747" /><path d="M1448 1378V1343H1486" stroke="#8c8c8c" strokeWidth="1" fill="none" /><path d="M1448 1378H1486" stroke="#c81030" strokeWidth="2" /><path d="M1486 1364V1378" stroke="#2f6bff" strokeWidth="2" />
      <Dim x={1485} y={1341} c="#00c800">Y</Dim><Dim x={1487} y={1361} c="#2f6bff">Z</Dim><Dim x={1449} y={1375} c="#e8102c">X</Dim>
    </>
  );
}

function CenterPanel() {
  const g1: ShapeName[] = ['cube', 'net', 'person', 'camera', 'snake', 'target', 'playB', 'gearBox', 'playBox', 'chip'];
  const g2: ShapeName[] = ['cube', 'net', 'flip', 'lens', 'person', 'camera', 'playB', 'gearBox'];
  const g3: ShapeName[] = ['list', 'layers', 'nodes', 'portrait', 'orbit', 'gearBox'];
  return (
    <main className="flex min-w-0 flex-1 flex-col">
      <div className="flex h-[67px] shrink-0 items-center justify-between border-b-2 border-[#2c2c2c] pr-3 pb-0.5 pl-2.5 text-[#c6c6c6]">
        <div className="flex items-center text-[#5fd870]">
          {g1.map((n) => <IconBtn key={n} name={n} label={'Layout ' + n} />)}
          <IconBtn name="plus" label="Add item" className="w-14 h-11" size={30} />
          <IconBtn name="wrenchBox" label="Edit layout" className="w-[46px] h-11 text-[#c6c6c6]" size={34} />
        </div>
        <div className="flex items-center">
          {g2.map((n, i) => <IconBtn key={n} name={n} label={'Mode ' + n} className={'w-[46px] h-11 ' + (i === 0 ? 'bg-[#ff9500]' : '')} />)}
          <IconBtn name="plus" label="Add mode" className="w-14 h-11" size={30} />
        </div>
        <div className="ml-[228px] flex items-center text-[#5fd870]">
          {g3.map((n) => <IconBtn key={n} name={n} label={'Panel ' + n} />)}
          <IconBtn name="plus" label="Add panel" className="w-[52px] h-11" size={30} />
        </div>
      </div>
      <div className="relative flex h-[14px] shrink-0 items-center justify-center border-b-2 border-[#282828]">
        <svg width="18" height="9" viewBox="0 0 18 9" className="mr-[440px]"><path d="M9 0l9 9H0z" fill="#5a5a5a" /></svg>
        <Grip />
        <span className="w-[464px]" />
      </div>
      <div className="grid flex-1 grid-cols-[786fr_1090fr] grid-rows-[1073fr_620fr] gap-x-0.5 gap-y-0.5 bg-[#2c2c2c]">
        <Viewport name="Top" mode="Wireframe" info={['GL: 0', '500 mm']} bg="bg-[#424242]" viewBox="629 327 786 1072"><TopScene /></Viewport>
        <Viewport name="Perspective" mode="Default" wide navRow persp info={['GL: 240', '200 mm']} bg="bg-[#2f2f2f]" viewBox="1417 327 1090 1072"><PerspectiveScene /></Viewport>
        <Viewport name="Front" mode="Wireframe" active info={['GL: 0', '500 mm']} bg="bg-[#424242]" viewBox="629 1401 786 620"><FrontScene /></Viewport>
        <Viewport name="Right" mode="Wireframe" wide navRow info={['GL: 0', '500 mm']} bg="bg-[#424242]" viewBox="1417 1401 1090 620"><RightScene /></Viewport>
      </div>
      <div className="flex h-[22px] shrink-0 items-center justify-center border-y-2 border-[#1f1f1f] bg-[#2e2e2e]"><svg width="18" height="9" viewBox="0 0 18 9"><path d="M9 0l9 9H0z" fill="#484848" /></svg></div>
      <footer className="grid h-[65px] shrink-0 grid-cols-[794fr_345fr_739fr] border-t-2 border-[#2c2c2c]">
        <p className="pt-1.5 pl-4">Position X, Y, Z: &nbsp;&nbsp; , −110 mm, 4.82 m</p>
        <div className="flex items-center border-x-2 border-[#2c2c2c] pb-1 pl-8">
          <button aria-label="History" className="w-11 text-[#5fd870]"><Ico size={42}>{shape.clock}</Ico></button>
          <button aria-label="Run" className="ml-[42px] w-11"><svg width="40" height="42" viewBox="0 0 40 42" fill="none"><circle cx="14" cy="12" r="11" stroke="#2c8a58" strokeWidth="2" /><circle cx="30" cy="6" r="4" fill="#00b060" /><path d="M27 11 17 25l9 5-5 9M18 26 4 32M26 13l-12 0-5 6M26 14l5 6 7-3" stroke="#00b060" strokeWidth="4" /></svg></button>
          <button aria-label="Windows" className="ml-7 w-10"><svg width="38" height="36" viewBox="0 0 38 36" fill="#3d3d3d" stroke="#a8a8a8" strokeWidth="2"><path d="M12 3l24-2v20l-22 2z" /><path d="M2 16l20 2 2 16-19 1z" /></svg></button>
          <button aria-label="Split" className="ml-3"><svg width="36" height="26" viewBox="0 0 36 26"><path d="M0 0h36v26H0z" fill="#2c2c2c" /><path d="M2 2h32v13H2z" fill="#6a9a80" /><path d="M2 17h32v7H2z" fill="#9aa2b2" /></svg></button>
          <button aria-label="Swap" className="ml-[17px]"><svg width="24" height="32" viewBox="0 0 24 32" fill="#7aa88c"><path d="M4 32V14H0L6 0h3v32zM15 0v32h3l6-14h-4V0z" /></svg></button>
        </div>
        <p className="pt-1.5 pl-6">[Any Key]−[Any Button] Click: &nbsp;&nbsp; Click</p>
      </footer>
    </main>
  );
}

/* ---------- right panel ---------- */

function Eye() {
  return <svg width="26" height="18" viewBox="0 0 26 18" fill="none" className="inline-block align-middle"><path d="M1 9C6 1 20 1 25 9 20 17 6 17 1 9zM4 4c5-4 13-4 18 0" stroke="#1c1c1c" strokeWidth="2" /><circle cx="13" cy="9" r="6" fill="#111" /><circle cx="12" cy="7.500" r="1.500" fill="#d0d0d0" /></svg>;
}

function Cross({ c }: { c: string }) {
  return <svg width="24" height="22" viewBox="0 0 24 22" className="inline-block align-middle"><path d="M12 1v20M2 14l20-6" stroke="#181818" strokeWidth="6" /><path d="M12 2v18M2 14l20-6" stroke={c} strokeWidth="3.200" /></svg>;
}

const items: [string, string][] = [
  ['21mm triboard', ''], ['36mm Triboard', ''], ['36mm Triboard', '(2)'], ['36mm triboard', ''],
  ['36mm triboard', '(2)'], ['36mm triboard', '(3)'], ['36mm triboard', '(4)'], ['36mm triboard', '(5)'], ['36mm triboard', '(6)'], ['36mm triboard', '(7)'], ['36mm triboard', '(8)'],
  ['21mm triboard', '(2)'], ['36mm triboard', '(9)'], ['36mm triboard', '(10)'], ['36mm triboard', '(11)'], ['36mm triboard', '(12)'], ['36mm triboard', '(13)'], ['36mm triboard', '(14)'], ['36mm triboard', '(15)'], ['36mm triboard', '(16)'],
];

function TabStrip({ children, first, firstW }: Kids & { first: string; firstW: string }) {
  return (
    <div className="flex h-[38px] shrink-0 items-center bg-[#2a2a2a] text-[#c0c0c0]">
      <svg width="30" height="14" viewBox="0 0 30 14" className="shrink-0"><circle cx="14" cy="7" r="6" fill="#101010" /><circle cx="16" cy="9" r="4" fill="#3a3a3a" /></svg>
      <button className={'h-full bg-[#3d3d3d] text-[#ff9500] ' + firstW}>{first}</button>
      {children}
      <div className="ml-auto flex text-[#9a9a9a]">
        <button aria-label="Expand" className="flex size-8 items-center justify-center"><Ico size={26}>{shape.expand}</Ico></button>
        <button aria-label="Panel options" className="flex size-8 items-center justify-center"><Ico size={26}>{shape.gear}</Ico></button>
        <button aria-label="Panel menu" className="flex w-7 items-center justify-center"><Ico size={20}>{shape.play}</Ico></button>
      </div>
    </div>
  );
}

function ScenePanel() {
  const col = 'border-r-2 border-[#303030] p-0 text-center';
  return (
    <div className="flex shrink-0 flex-col">
      <TabStrip first="Scenes" firstW="w-28">
        <button className="ml-[18px]">Shading</button>
        <button className="ml-[39px]">Groups</button>
        <button className="ml-7">+</button>
      </TabStrip>
      <div className="mt-2.5 flex h-8 items-stretch pr-2 pl-2">
        <button className="w-56 bg-[#4b4b4b]">Add Item</button>
        <button aria-label="Item types" className="ml-1 flex w-9 items-center justify-center bg-[#4b4b4b]"><Down /></button>
        <button className="ml-auto w-24 bg-[#4b4b4b]">Select</button>
        <button className="ml-2 w-24 bg-[#4b4b4b]">Filter</button>
        <button aria-label="Collapse" className="flex w-12 items-center justify-center"><svg width="24" height="24" viewBox="0 0 24 24"><path d="M4 4h18M4 8h18M4 16h18M4 20h18" stroke="#2b2b2b" strokeWidth="2" /><path d="M2 12h20" stroke="#ddd" strokeWidth="3" /><path d="m0 12 7-4v8z" fill="#ddd" /></svg></button>
        <button aria-label="Columns" className="flex w-8 items-center justify-center"><svg width="20" height="24" viewBox="0 0 20 24"><path d="M0 0h20v24H0z" fill="#1e1e1e" /><path d="M3 2h14v20H3z" fill="#e0e0e0" /><path d="M3 7h14M3 12h14M3 17h14" stroke="#1e1e1e" strokeWidth="2" /></svg></button>
        <button aria-label="Filter list" className="ml-2 flex w-9 items-center justify-center"><svg width="26" height="24" viewBox="0 0 26 24"><path d="M0 0h26L16 13v10l-6-4v-6z" fill="#d8d8d8" /></svg></button>
      </div>
      <div className="mt-1.5 mr-2 ml-2 grid grid-cols-[1fr_30px]">
        <div className="border-t-2 border-[#303030] bg-[#4d4d4d] pb-[15px]">
          <table className="w-full table-fixed border-collapse">
            <colgroup><col className="w-[50px]" /><col className="w-[50px]" /><col className="w-[50px]" /><col /></colgroup>
            <thead>
              <tr className="h-9 border-b-2 border-[#1f1f1f] bg-[#3a3a3a] text-[#c8c8c8]">
                <th className={col + ' pr-4'}><Eye /></th><th className={col}><Cross c="#e8e8e8" /></th>
                <th className={col + ' pr-2.5'}><svg width="24" height="22" viewBox="0 0 24 22" className="inline-block align-middle" strokeWidth="4"><path d="M10 13V1" stroke="#10c040" /><path d="M10 12l12 3" stroke="#f03048" /><path d="m10 12-8 6" stroke="#38a0f0" /></svg></th>
                <th className="pl-7 text-left font-normal">Name</th>
              </tr>
            </thead>
            <tbody>
              <tr className="h-8 bg-[#3d3d3d] text-[#ff9500]">
                <td className={col + ' pr-4'}><Eye /></td><td className={col}><Cross c="#ff9500" /></td><td className={col} />
                <td className="p-0">
                  <div className="flex items-center pb-0.5 pl-8">
                    <svg width="16" height="14" viewBox="0 0 16 14"><path d="M0 0h16L8 14z" fill="#0a0a0a" /></svg>
                    <svg width="24" height="20" viewBox="0 0 24 20" className="ml-6"><path d="M1 2h9l3 3h4v11H3z" fill="#fff" /><path d="M8 9h15l-5 10H4z" fill="#8a8a8a" /></svg>
                    <span className="ml-1.5">Seat Shelves Triboard</span>
                  </div>
                </td>
              </tr>
              {items.map(([n, s], i) => (
                <tr key={i} className={i % 2 ? 'h-[34px] bg-[#4a4a4a]' : 'h-[34px] bg-[#4f4f4f]'}>
                  <td className={col + ' pr-4'}><Eye /></td><td className={col} /><td className={col} />
                  <td className="p-0">
                    <div className="flex h-[34px] items-center">
                      <svg width="66" height="34" viewBox="0 0 66 34"><path d="M15 0v34" stroke="#141414" strokeWidth="2" strokeDasharray="2 2" /><path d={i === items.length - 1 ? 'M39 0v17' : 'M39 0v34'} stroke="#141414" strokeWidth="2" strokeDasharray="2 2" /><path d="M42 17h10" stroke="#141414" strokeWidth="2" strokeDasharray="2 2" /><path d="M54 14h6v6h-6z" fill="#222" /></svg>
                      <span className="mr-1.5 ml-7"><Cube size={28} top="#a8cdf0" left="#7795b4" right="#5f7d9c" /></span>
                      {n}<span className="ml-2 text-[#939393]">{s}</span>
                    </div>
                  </td>
                </tr>
              ))}
            </tbody>
          </table>
        </div>
        <div className="flex flex-col justify-end border-2 border-[#2e2e2e] bg-[#333] pb-[21px]"><span className="h-24 bg-[#565656]" /></div>
      </div>
      <div className="mr-[37px] mt-0.5 ml-2 h-7 border border-[#2e2e2e] bg-[#333]"><div className="h-full w-[79%] bg-[#565656]" /></div>
    </div>
  );
}

function Channel({ names, values, prefix }: { names: string[]; values: string; prefix: string }) {
  return (
    <div className="grid grid-cols-[1fr_24px_290px] gap-x-1">
      <div className="flex flex-col gap-px pr-2 text-right leading-8">{names.map((n) => <span key={n}>{n}</span>)}</div>
      <div className="flex flex-col gap-px">{names.map((n) => (
        <button key={n} aria-label={'Key ' + prefix + ' ' + n} className="flex h-8 items-center justify-center"><span className="size-[20px] rounded-full border-2 border-[#8c8c8c]" /></button>
      ))}</div>
      <div className="flex flex-col gap-px bg-[#2d2d2d]">{names.map((n) => <NumField key={n} label={prefix + ' ' + n} value={values} />)}</div>
    </div>
  );
}

function PropertiesPanel() {
  return (
    <div className="mt-2 flex flex-1 flex-col">
      <TabStrip first="Properties" firstW="w-[130px]">
        <button className="ml-[18px]">Channels</button>
        <button className="ml-9">Vertex</button>
        <span className="ml-5">...</span>
        <button className="ml-12">Stats</button>
        <button className="ml-10">+</button>
      </TabStrip>
      <div className="flex pt-2 pl-2">
        <div className="flex min-w-0 flex-1 flex-col">
          <div className="flex h-[38px] items-center justify-end pb-1 text-[19px]">
            <span>Presets</span>
            <button className="ml-3.5 flex items-center gap-1.5">One Tab<Down /></button>
            <button className="ml-3.5 flex items-center gap-1.5">All Tabs<Down /></button>
            <span className="w-1.5" />
          </div>
          <label className="grid h-9 grid-cols-[1fr_320px] items-center gap-x-2.5 pr-0.5 text-right">Name
            <input defaultValue="Seat Shelves Triboard" className="h-full min-w-0 bg-[#2d2d2d] pl-[18px] text-[#c8c8c8] outline-none" />
          </label>
          <div className="mt-1 flex flex-col gap-2">
            <Section title="Notes" open={false} menu />
            <Section title="Transform" menu />
          </div>
          <div className="mt-2 flex flex-col gap-1.5 pr-0.5">
            <Channel prefix="Position" names={['Position X', 'Y', 'Z']} values="0 m" />
            <div>
              <Channel prefix="Rotation" names={['Rotation X', 'Y', 'Z']} values="0.0 °" />
              <div className="mt-0.5 grid h-[30px] grid-cols-[1fr_24px_290px] items-center gap-x-1">
                <span className="pr-2 text-right">Order</span>
                <button aria-label="Key Order" className="flex justify-center"><span className="size-[18px] rounded-full border-2 border-[#1c1c1c] bg-[#9a9a9a]" /></button>
                <Drop label="Order" options={['ZXY']} className="h-[30px]" />
              </div>
            </div>
            <Channel prefix="Scale" names={['Scale X', 'Y', 'Z']} values="100.0 %" />
          </div>
          <div className="mt-1.5 ml-auto flex w-[292px] flex-col gap-1 pr-0.5">
            <Drop label="Reset" options={['Reset']} className="h-[30px]" />
            <Drop label="Zero" options={['Zero']} className="h-7" />
            <Drop label="Add" options={['Add']} className="h-[30px]" />
          </div>
        </div>
        <div className="mr-2 ml-2"><SideTabs items={rightTabs} /></div>
      </div>
    </div>
  );
}

function RightPanel() {
  return (
    <aside className="flex w-[672px] shrink-0 flex-col">
      <div className="flex h-16 shrink-0 items-center pl-[140px]">
        {[
          <svg width="40" height="40" viewBox="0 0 40 40"><circle cx="11" cy="13" r="9" fill="url(#gwh)" /><circle cx="29" cy="13" r="9" fill="url(#gwh)" /><circle cx="20" cy="25" r="11" fill="url(#gwh)" /></svg>,
          <svg width="40" height="40" viewBox="0 0 40 40"><path d="M4 5 16 1l14 4v17L16 28 5 23z" fill="#d89030" /><path d="M4 5l12 3 14-3-14-4z" fill="#f0b868" /><circle cx="24" cy="20" r="8.500" fill="#c89048" fillOpacity=".5" stroke="#e8e8e8" strokeWidth="3" /><path d="M18 27 9 38" stroke="#e8e8e8" strokeWidth="3" /></svg>,
          <svg width="40" height="40" viewBox="0 0 40 40"><path d="M20 5l10-3 8 3v12l-9 4-9-3z" fill="#6fa4e0" /><path d="M3 16l15-5 10 4v15L14 37 3 32z" fill="#5a68ee" /><path d="M14 20l14-5v15l-14 7z" fill="#3c48b8" /></svg>,
          <svg width="40" height="40" viewBox="0 0 40 40"><path d="M18 3l8-2 6 2v10H18z" fill="#6fa4e0" /><path d="M8 8l9-3 8 3v14H8z" fill="#5a68ee" /><path d="M17 11l8-3v14h-8z" fill="#3c48b8" /><path d="M3 20l9-3 8 3v11l-9 3-8-3z" fill="#6a78ff" /><path d="M20 24l10-6 8 3v9l-11 8-7-4z" fill="#4c5ad8" /></svg>,
          <svg width="40" height="40" viewBox="0 0 40 40"><path d="M3 3l8 2 3 3 6 1-10 11-5-1z" fill="#fff" /><path d="M10 10l10-1-10 11z" fill="#8a8a8a" /><path d="M14 18l10-5 13 5v14l-10 7-13-6z" fill="#8fc4f0" /><path d="M14 18l12 4v17l-12-6z" fill="#bfe0fa" /></svg>,
          <svg width="40" height="40" viewBox="0 0 40 40"><path d="M3 7l9-5 11 4v11l-9 5-11-4z" fill="#7d8086" /><circle cx="10" cy="12" r="4" fill="none" stroke="#b8d0b8" strokeWidth="2" /><path d="M18 22l9-4 12 3v12l-9 6-12-4z" fill="#8b8674" /><circle cx="26" cy="29" r="4.500" fill="none" stroke="#b8d0b8" strokeWidth="2" /></svg>,
          <svg width="40" height="40" viewBox="0 0 40 40"><path d="M14 2l11 8-11 14L3 16z" fill="#8f9094" /><path d="M26 13l12 8-12 15-12-9z" fill="#9a9682" /></svg>,
          <svg width="44" height="40" viewBox="0 0 44 40"><path d="M3 8 20 2l17 6-17 6z" fill="#a8bccc" /><path d="M3 8l17 6v24L6 31z" fill="#74889a" /><path d="M37 8l-17 6v24l14-7z" fill="#5c7082" /><path d="M24 19h8v-4l8 7-8 7v-4h-8z" fill="#5cc800" /></svg>,
        ].map((v, i) => <button key={i} aria-label={'Scene tool ' + (i + 1)} className="flex w-[48px] items-center justify-center">{v}</button>)}
      </div>
      <ScenePanel />
      <PropertiesPanel />
      <form className="flex h-[63px] shrink-0 items-center border-t-2 border-[#2c2c2c] pl-3" onSubmit={(e) => e.preventDefault()}>
        <label htmlFor="cmd" className="w-7">&gt;</label>
        <input id="cmd" defaultValue="Command" className="h-[34px] min-w-0 flex-1 bg-[#2d2d2d] pl-[18px] text-[#c8c8c8] outline-none" />
        <button type="button" aria-label="Record" className="mr-[22px] ml-4 size-[26px] rounded-full border-[3px] border-[#c8606c]" />
      </form>
    </aside>
  );
}

function Divider({ left }: { left?: boolean }) {
  return (
    <div className={'relative flex shrink-0 flex-col items-center border-[#2c2c2c] ' + (left ? 'w-[13px] border-r-2' : 'w-[15px] border-x-2')}>
      {left && <svg width="10" height="18" viewBox="0 0 10 18" className="mt-[430px]"><path d="M10 0v18L0 9z" fill="#5a5a5a" /></svg>}
      <div className={left ? 'mt-[439px]' : 'mt-[886px]'}><Grip vertical /></div>
      {!left && <svg width="10" height="18" viewBox="0 0 10 18" className="mt-[435px]"><path d="M0 0v18l10-9z" fill="#5a5a5a" /></svg>}
    </div>
  );
}

export default function App() {
  return (
    <div className="flex min-h-screen flex-col bg-white px-28 pt-[76px] pb-[148px] font-['Open_Sans','Noto_Sans',sans-serif] text-[21px] leading-6 text-[#dcdcdc]">
      <Defs />
      <div className="flex flex-1 flex-col overflow-hidden rounded-[20px] bg-[#3d3d3d] shadow-[0_0_2px_1px_rgba(0,0,0,0.35),0_36px_80px_rgba(0,0,0,0.5)]">
        <TitleBar />
        <MenuBar />
        <Toolbar />
        <div className="flex flex-1">
          <LeftPanel />
          <Divider left />
          <CenterPanel />
          <Divider />
          <RightPanel />
        </div>
      </div>
    </div>
  );
}
